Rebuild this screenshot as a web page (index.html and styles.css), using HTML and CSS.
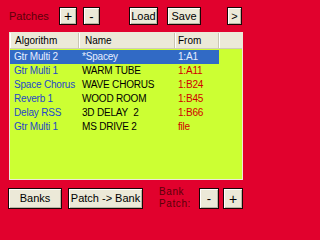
FILE: index.html
```html
<!DOCTYPE html>
<html>
<head>
<meta charset="utf-8">
<link rel="stylesheet" href="styles.css">
</head>
<body>
<div class="app">
  <div class="top">
    <span class="label patches">Patches</span>
    <button class="btn b-plus">+</button>
    <button class="btn b-minus">-</button>
    <button class="btn b-load">Load</button>
    <button class="btn b-save">Save</button>
    <button class="btn b-next">&gt;</button>
  </div>
  <div class="list">
    <div class="head">
      <div class="hc c1">Algorithm</div>
      <div class="hc c2">Name</div>
      <div class="hc c3">From</div>
      <div class="hc c4"></div>
    </div>
    <div class="rows">
      <div class="row sel"><span class="alg">Gtr Multi 2</span><span class="nm">*Spacey</span><span class="fr">1:A1</span></div>
      <div class="row"><span class="alg">Gtr Multi 1</span><span class="nm">WARM TUBE</span><span class="fr">1:A11</span></div>
      <div class="row"><span class="alg">Space Chorus</span><span class="nm">WAVE CHORUS</span><span class="fr">1:B24</span></div>
      <div class="row"><span class="alg">Reverb 1</span><span class="nm">WOOD ROOM</span><span class="fr">1:B45</span></div>
      <div class="row"><span class="alg">Delay RSS</span><span class="nm">3D DELAY&nbsp; 2</span><span class="fr">1:B66</span></div>
      <div class="row"><span class="alg">Gtr Multi 1</span><span class="nm">MS DRIVE 2</span><span class="fr">file</span></div>
    </div>
  </div>
  <div class="bottom">
    <button class="btn b-banks">Banks</button>
    <button class="btn b-p2b">Patch -&gt; Bank</button>
    <span class="label bp">Bank<br>Patch:</span>
    <button class="btn b-dec">-</button>
    <button class="btn b-inc">+</button>
  </div>
</div>
</body>
</html>
```
FILE: styles.css
```css
html, body {
  margin: 0;
  padding: 0;
  background: #e1012d;
}
body {
  width: 252px;
  height: 215px;
  overflow: hidden;
  font-family: "Liberation Sans", Arial, sans-serif;
}
.app {
  display: flex;
  flex-direction: column;
}
.label {
  color: #5c0008;
  font-size: 11px;
}
.btn {
  box-sizing: border-box;
  margin: 0;
  padding: 0;
  border: 1px solid #1a0505;
  background: #ece9d8;
  box-shadow: inset 1px 1px #ffffff, inset -1px -1px #b9b6a4;
  font-family: "Liberation Sans", Arial, sans-serif;
  font-size: 11px;
  color: #000;
  line-height: 1;
  white-space: nowrap;
  display: flex;
  align-items: center;
  justify-content: center;
}
.top {
  display: flex;
  align-items: center;
  height: 18px;
  margin-top: 7px;
  padding-left: 9px;
}
.top .btn { height: 18px; }
.patches { width: 50px; }
.b-plus { width: 18px; font-size: 14px; }
.b-minus { width: 17px; margin-left: 6px; font-size: 13px; }
.b-load { width: 29px; margin-left: 29px; }
.b-save { width: 34px; margin-left: 9px; }
.b-next { width: 15px; margin-left: 26px; }

.list {
  box-sizing: border-box;
  margin: 7px 0 0 9px;
  width: 234px;
  height: 148px;
  border: 1px solid #ece9d8;
  background: #ccff33;
  font-size: 10px;
}
.head {
  display: grid;
  grid-template-columns: 69px 96px 44px 1fr;
  height: 15px;
  background: #ece9d8;
  border-bottom: 1px solid #cfcbb8;
}
.hc {
  line-height: 15px;
  color: #000;
  border-right: 1px solid #c9c5b1;
  box-shadow: inset 1px 0 #ffffff;
  white-space: nowrap;
}
.hc.c1 { padding-left: 5px; }
.hc.c2 { padding-left: 6px; }
.hc.c3 { padding-left: 3px; }
.hc.c4 { border-right: none; }
.rows {
  padding-top: 1px;
}
.row {
  display: grid;
  grid-template-columns: 69px 96px 44px;
  width: 209px;
  height: 14px;
  line-height: 14px;
  white-space: nowrap;
  letter-spacing: -0.2px;
}
.alg { color: #2449c9; padding-left: 4px; }
.nm { color: #000; padding-left: 3px; }
.fr { color: #d00000; padding-left: 3px; }
.row.sel { background: #316ac5; }
.row.sel span { color: #e6eeff; }

.bottom {
  display: flex;
  align-items: center;
  height: 21px;
  margin-top: 8px;
  padding-left: 8px;
}
.bottom .btn { height: 21px; }
.b-banks { width: 54px; }
.b-p2b { width: 75px; margin-left: 6px; }
.bp {
  width: 40px;
  margin-left: 16px;
  font-size: 10px;
  line-height: 12px;
  letter-spacing: 0.6px;
  margin-top: -1px;
}
.b-dec { width: 20px; font-size: 13px; }
.b-inc { width: 20px; margin-left: 4px; font-size: 14px; }
```
